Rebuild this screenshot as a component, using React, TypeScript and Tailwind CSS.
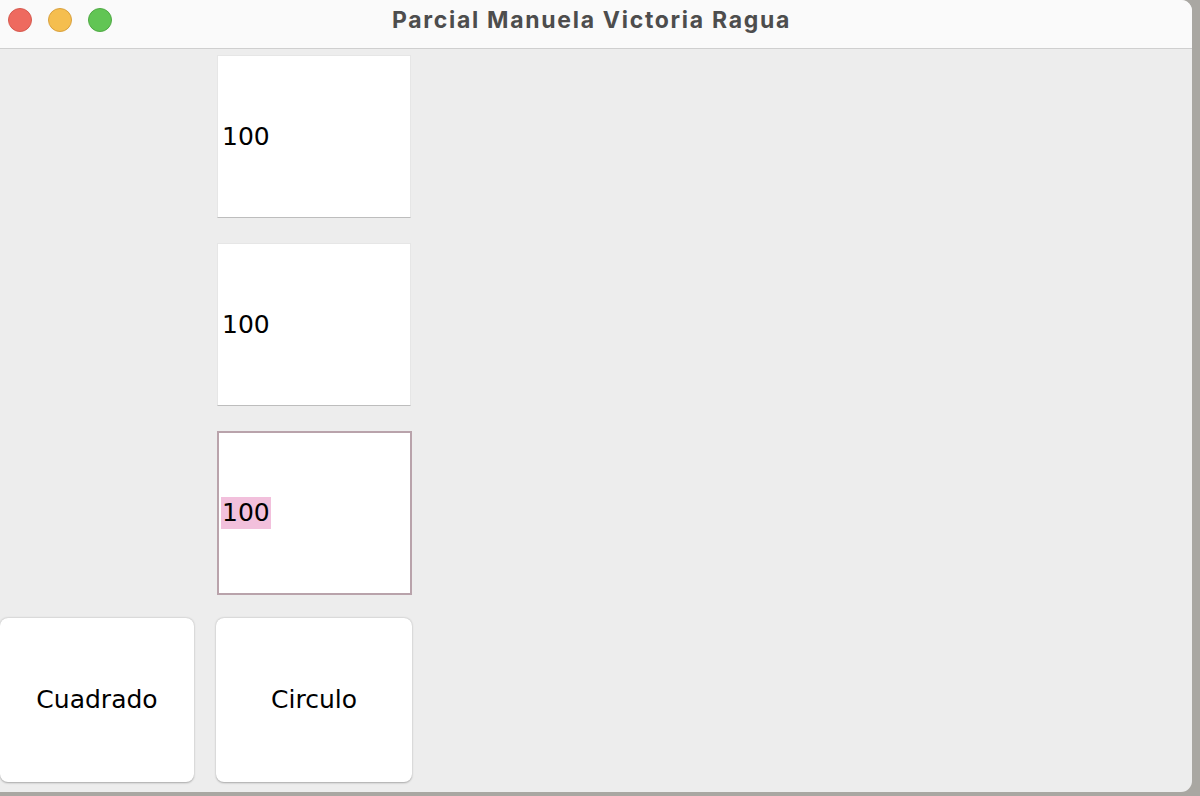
import React from "react";

const fieldFont = { fontFamily: '"DejaVu Sans", Verdana, sans-serif' };

function Field({ focused }: { focused?: boolean }) {
  return (
    <div
      className={
        focused
          ? "ml-[1px] w-[195px] h-[164px] bg-white border-2 border-[#b9a3ab] flex items-center pl-[2px]"
          : "ml-[1px] w-[194px] h-[163px] bg-white border border-[#e6e6e6] border-b-[#bdbdbd] flex items-center pl-[4px]"
      }
    >
      <span
        className={
          focused
            ? "text-[25px] leading-[32px] text-black bg-[#f2c0dc] px-[1px]"
            : "text-[25px] leading-[32px] text-black"
        }
        style={fieldFont}
      >
        100
      </span>
    </div>
  );
}

function Btn({ label, w }: { label: string; w: string }) {
  return (
    <div
      className={`${w} h-[164px] bg-white rounded-[8px] shadow-[0_0.5px_2px_rgba(0,0,0,0.3)] flex items-center justify-center`}
    >
      <span className="text-[25px] text-black" style={fieldFont}>
        {label}
      </span>
    </div>
  );
}

export default function App() {
  return (
    <div className="w-[1200px] h-[796px] bg-[#a9a7a2] overflow-hidden">
      <div className="w-[1192px] h-[792px] bg-[#ededed] rounded-tr-[11px] rounded-br-[11px] overflow-hidden flex flex-col">
        <div className="h-[49px] shrink-0 bg-[#fafafa] border-b border-[#cfcfcf] relative flex items-center justify-center">
          <div className="absolute left-[8px] top-[8px] flex gap-[16px]">
            <div className="w-[24px] h-[24px] rounded-full bg-[#ee6a5f] border border-[#d65a4f]" />
            <div className="w-[24px] h-[24px] rounded-full bg-[#f5be4f] border border-[#d9a13f]" />
            <div className="w-[24px] h-[24px] rounded-full bg-[#61c554] border border-[#4fa944]" />
          </div>
          <span
            className="text-[23px] font-bold text-[#4d4d4d] pb-[8px] mr-[9px] tracking-[1.7px]"
            style={{ fontFamily: 'Inter, "Liberation Sans", sans-serif' }}
          >
            Parcial Manuela Victoria Ragua
          </span>
        </div>
        <div className="pt-[6px] grid grid-cols-[194px_196px] gap-x-[22px] gap-y-[25px]">
          <div />
          <Field />
          <div />
          <Field />
          <div />
          <div className="-mb-[2px]">
            <Field focused />
          </div>
          <Btn label="Cuadrado" w="w-[194px]" />
          <Btn label="Circulo" w="w-[196px]" />
        </div>
      </div>
    </div>
  );
}
